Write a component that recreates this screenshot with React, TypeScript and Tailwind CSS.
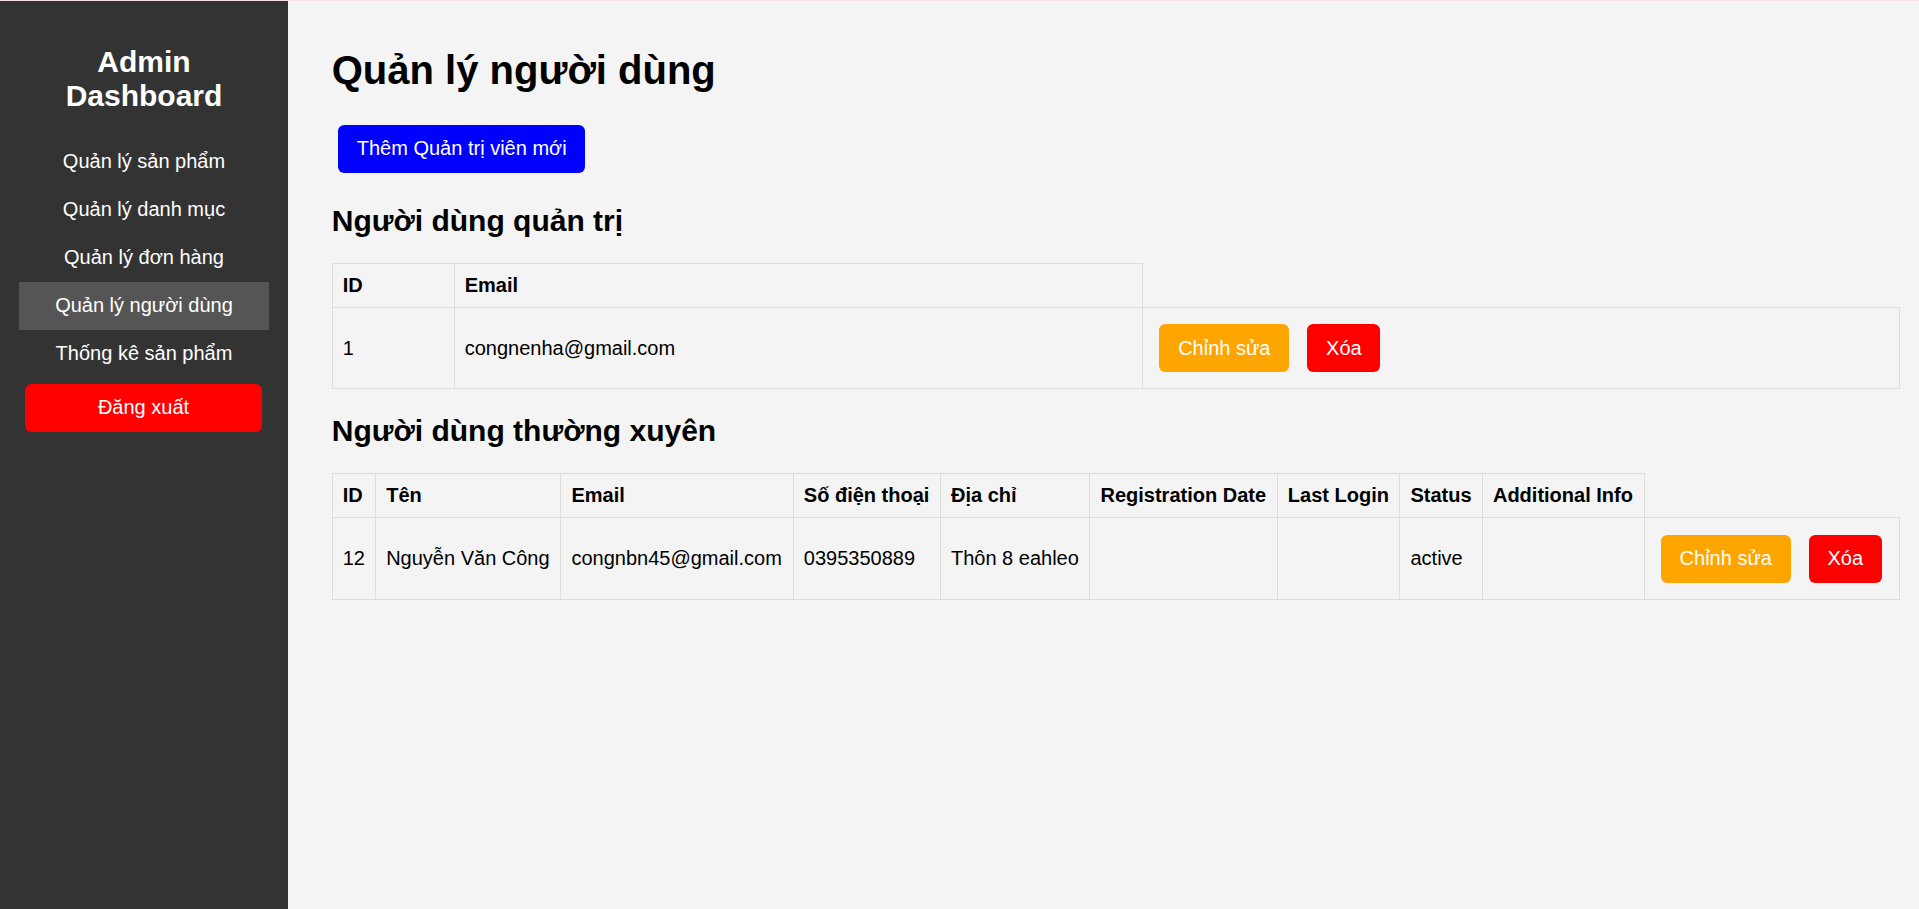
import React from "react";

type RegularUser = {
  id: number;
  name: string;
  email: string;
  phone: string;
  address: string;
  registeredAt: string;
  lastLogin: string;
  status: string;
  info: string;
};

const navItems = [
  { label: "Quản lý sản phẩm", active: false },
  { label: "Quản lý danh mục", active: false },
  { label: "Quản lý đơn hàng", active: false },
  { label: "Quản lý người dùng", active: true },
  { label: "Thống kê sản phẩm", active: false },
];

const admins = [{ id: 1, email: "congnenha@gmail.com" }];

const users: RegularUser[] = [
  {
    id: 12,
    name: "Nguyễn Văn Công",
    email: "congnbn45@gmail.com",
    phone: "0395350889",
    address: "Thôn 8 eahleo",
    registeredAt: "",
    lastLogin: "",
    status: "active",
    info: "",
  },
];

const userColumns = [
  "ID",
  "Tên",
  "Email",
  "Số điện thoại",
  "Địa chỉ",
  "Registration Date",
  "Last Login",
  "Status",
  "Additional Info",
];

const cell = "border border-[#ddd] p-[10px] text-left align-middle";

function RowActions({ height }: { height: string }) {
  return (
    <td className={`${cell} ${height}`}>
      <button
        type="button"
        className="mx-[6.25px] inline-block rounded-[6.25px] bg-[#ffa500] px-[18.75px] py-[12.5px] align-middle text-white"
      >
        Chỉnh sửa
      </button>{" "}
      <button
        type="button"
        className="mx-[6.25px] inline-block rounded-[6.25px] bg-[#ff0000] px-[18.75px] py-[12.5px] align-middle text-white"
      >
        Xóa
      </button>
    </td>
  );
}

function Sidebar() {
  return (
    <aside className="w-[288px] shrink-0 bg-[#333] p-[18.75px] text-white">
      <h2 className="mb-[24px] mt-[24.9px] text-center text-[30px] font-bold leading-[34.5px]">
        Admin Dashboard
      </h2>
      <nav>
        {navItems.map((item) => (
          <a
            key={item.label}
            href="#"
            className={`block py-[12.5px] text-center text-white ${item.active ? "bg-[#555]" : ""}`}
          >
            {item.label}
          </a>
        ))}
        <button
          type="button"
          className="m-[6px] block w-[237.5px] rounded-[6.25px] bg-[#ff0000] px-[18.75px] py-[12.5px] text-center text-white"
        >
          Đăng xuất
        </button>
      </nav>
    </aside>
  );
}

export default function App() {
  return (
    <div
      className="flex min-h-screen flex-col border-t border-[#f7e1e6] bg-[#f4f4f4] text-[20px] leading-[23px] text-black"
      style={{ fontFamily: '"Liberation Sans", Arial, sans-serif' }}
    >
      <div className="flex flex-1">
        <Sidebar />
        <main className="flex-1 pb-[18.75px] pl-[43.75px] pr-[18.75px] pt-[18.75px]">
          <h1 className="mb-[25.8px] mt-[26.8px] text-[40px] font-bold leading-[46px]">Quản lý người dùng</h1>

          <div className="flex">
            <button
              type="button"
              className="m-[6.25px] rounded-[6.25px] bg-[#0000ff] px-[18.75px] py-[12.5px] text-white"
            >
              Thêm Quản trị viên mới
            </button>
          </div>

          <h2 className="my-[24.9px] text-[30px] font-bold leading-[34.5px]">Người dùng quản trị</h2>
          <table className="w-full border-collapse">
            <thead>
              <tr>
                <th className={`${cell} font-bold`}>ID</th>
                <th className={`${cell} font-bold`}>Email</th>
              </tr>
            </thead>
            <tbody>
              {admins.map((a) => (
                <tr key={a.id}>
                  <td className={cell}>{a.id}</td>
                  <td className={cell}>{a.email}</td>
                  <RowActions height="h-[81px]" />
                </tr>
              ))}
            </tbody>
          </table>

          <h2 className="my-[24.9px] text-[30px] font-bold leading-[34.5px]">Người dùng thường xuyên</h2>
          <table className="w-full border-collapse">
            <thead>
              <tr>
                {userColumns.map((c) => (
                  <th key={c} className={`${cell} font-bold`}>
                    {c}
                  </th>
                ))}
              </tr>
            </thead>
            <tbody>
              {users.map((u) => (
                <tr key={u.id}>
                  <td className={cell}>{u.id}</td>
                  <td className={cell}>{u.name}</td>
                  <td className={cell}>{u.email}</td>
                  <td className={cell}>{u.phone}</td>
                  <td className={cell}>{u.address}</td>
                  <td className={cell}>{u.registeredAt}</td>
                  <td className={cell}>{u.lastLogin}</td>
                  <td className={cell}>{u.status}</td>
                  <td className={cell}>{u.info}</td>
                  <RowActions height="h-[82px]" />
                </tr>
              ))}
            </tbody>
          </table>
        </main>
      </div>
    </div>
  );
}
